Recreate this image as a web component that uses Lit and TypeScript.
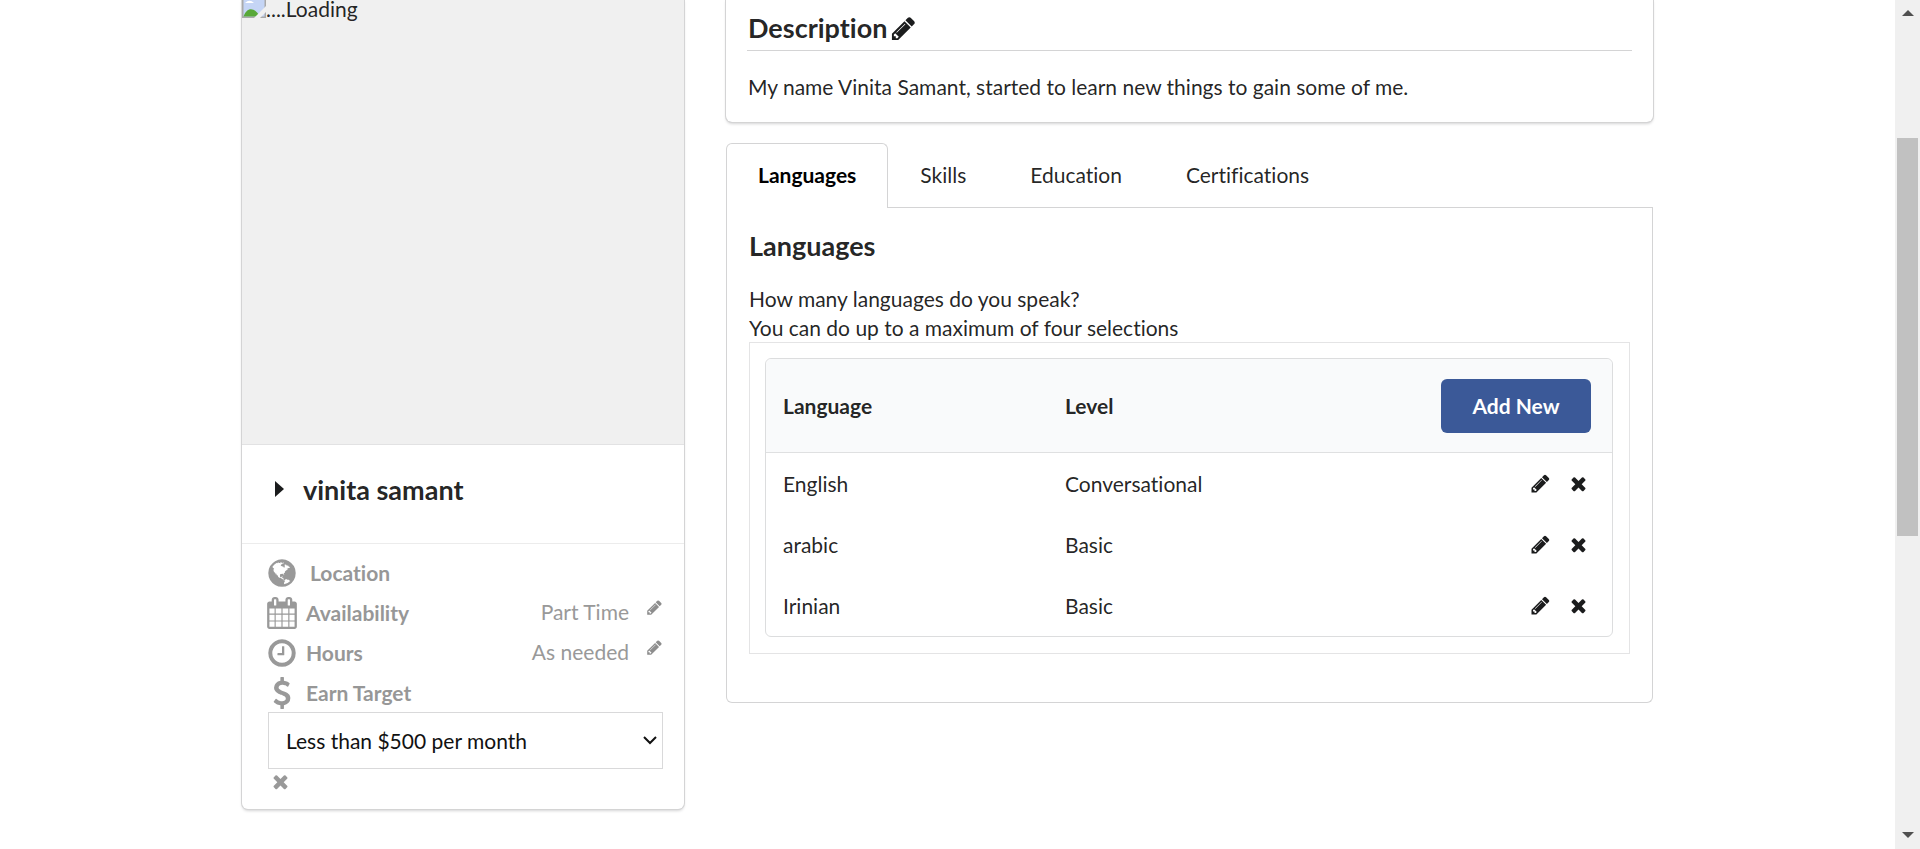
import { LitElement, html, css, svg } from "lit";
import { customElement, property, state } from "lit/decorators.js";

const GLYPHS: Record<string, string> = {
  pencil:
    "M491 1536l91-91-235-235-91 91v107h128v128h107zm523-928q0-22-22-22-10 0-17 7l-542 542q-7 7-7 17 0 22 22 22 10 0 17-7l542-542q7-7 7-17zm-54-192l416 416-832 832h-416v-416zm683 96q0 53-37 90l-166 166-416-416 166-165q36-38 90-38 53 0 91 38l235 234q37 39 37 91z",
  close:
    "M1490 1322q0 40-28 68l-136 136q-28 28-68 28t-68-28l-294-294-294 294q-28 28-68 28t-68-28l-136-136q-28-28-28-68t28-68l294-294-294-294q-28-28-28-68t28-68l136-136q28-28 68-28t68 28l294 294 294-294q28-28 68-28t68 28l136 136q28 28 28 68t-28 68l-294 294 294 294q28 28 28 68z",
  globe:
    "M896 128q209 0 385.5 103t279.5 279.5 103 385.5-103 385.5-279.5 279.5-385.5 103-385.5-103-279.5-279.5-103-385.5 103-385.5 279.5-279.5 385.5-103zm274 521q-2 1-9.5 9.5t-13.5 9.5q2 0 4.5-5t5-11 3.5-7q6-7 22-15 14-6 52-12 34-8 51 11-2-2 9.5-13t14.5-12q3-2 15-4.5t15-7.5l2-22q-12 1-17.5-7t-6.5-21q0 2-6 8 0-7-4.5-8t-11.5 1-9 1q-10-3-15-7.5t-8-16.5-4-15q-2-5-9.5-11t-9.5-10q-1-2-2.5-5.5t-3-6.5-4-5.5-5.5-2.5-7 5-7.5 10-4.5 5q-3-2-6-1.5t-4.5 1-4.5 3-5 3.5q-3 2-8.5 3t-8.5 2q15-5-1-11-10-4-16-3 9-4 7.5-12t-8.5-14h5q-1-4-8.5-8.5t-17.5-8.5-13-6q-8-5-34-9.5t-33-.5q-5 6-4.5 10.5t4 14 3.5 12.5q1 6-5.5 13t-6.5 12q0 7 14 15.5t10 21.5q-3 8-16 16t-16 12q-5 8-1.5 18.5t10.5 16.5q2 2 1.5 4t-3.5 4.5-5.5 4-6.5 3.5l-3 2q-11 5-20.5-6t-13.5-26q-7-25-16-30-23-8-29 1-5-13-41-26-25-9-58-4 6-1 0-15-7-15-19-12 3-6 4-17.5t1-13.5q3-13 12-23 1-1 7-8.5t9.5-13.5.5-6q35 4 50-11 5-5 11.5-17t10.5-17q9-6 14-5.5t14.5 5.5 14.5 5q14 1 15.5-11t-7.5-20q12 1 3-17-4-7-8-9-12-4-27 5-8 4 2 8-1-1-9.5 10.5t-16.5 17.5-16-5q-1-1-5.5-13.5t-9.5-13.5q-8 0-16 15 3-8-11-15t-24-8q19-12-8-27-7-4-20.5-5t-19.5 4q-5 7-5.5 11.5t5 8 10.5 5.5 11.5 4 8.5 3q14 10 8 14-2 1-8.5 3.5t-11.5 4.5-6 4q-3 4 0 14t-2 14q-5-5-9-17.5t-7-16.5q7 9-25 6l-10-1q-4 0-16 2t-20.5 1-13.5-8q-4-8 0-20 1-4 4-2-4-3-11-9.5t-10-8.5q-46 15-94 41 6 1 12-1 5-2 13-6.5t10-5.5q34-14 42-7l5-5q14 16 20 25-7-4-30-1-20 6-22 12 7 12 5 18-4-3-11.5-10t-14.5-11-15-5q-16 0-22 1-146 80-235 222 7 7 12 8 4 1 5 9t2.5 11 11.5-3q9 8 3 19 1-1 44 27 19 17 21 21 3 11-10 18-1-2-9-9t-9-4q-3 5 .5 18.5t10.5 12.5q-7 0-9.5 16t-2.5 35.5-1 23.5l2 1q-3 12 5.5 34.5t21.5 19.5q-13 3 20 43 6 8 8 9 3 2 12 7.5t15 10 10 10.5q4 5 10 22.5t14 23.5q-2 6 9.5 20t10.5 23q-1 0-2.5 1t-2.5 1q3 7 15.5 14t15.5 13q1 3 2 10t3 11 8 2q2-20-24-62-15-25-17-29-3-5-5.5-15.5t-4.5-14.5q2 0 6 1.5t8.5 3.5 7.5 4 2 3q-3 7 2 17.5t12 18.5 17 19 12 13q6 6 14 19.5t0 13.5q9 0 20 10t17 20q5 8 8 26t5 24q2 7 8.5 13.5t12.5 9.5l16 8 13 7q5 2 18.5 10.5t21.5 11.5q10 4 16 4t14.5-2.5 13.5-3.5q15-2 29 15t21 21q36 19 55 11-2 1 .5 7.5t8 15.5 9 14.5 5.5 8.5q5 6 18 15t18 15q6-4 7-9-3 8 7 20t18 10q14-3 14-32-31 15-49-18 0-1-2.5-5.5t-4-8.5-2.5-8.5 0-7.5 5-3q9 0 10-3.5t-2-12.5-4-13q-1-8-11-20t-12-15q-5 9-16 8t-16-9q0 1-1.5 5.5t-1.5 6.5q-13 0-15-1 1-3 2.5-17.5t3.5-22.5q1-4 5.5-12t7.5-14.5 4-12.5-4.5-9.5-17.5-2.5q-19 1-26 20-1 3-3 10.5t-5 11.5-9 7q-7 3-24 2t-24-5q-13-8-22.5-29t-9.5-37q0-10 2.5-26.5t3-25-5.5-24.5q3-2 9-9.5t10-10.5q2-1 4.5-1.5t4.5 0 4-1.5 3-6q-1-1-4-3-3-3-4-3 7 3 28.5-1.5t27.5 1.5q15 11 22-2 0-1-2.5-9.5t-.5-13.5q5 27 29 9 3 3 15.5 5t17.5 5q3 2 7 5.5t5.5 4.5 5-.5 8.5-6.5q10 14 12 24 11 40 19 44 7 3 11 2t4.5-9.5 0-14-1.5-12.5l-1-8v-18l-1-8q-15-3-18.5-12t1.5-18.5 15-18.5q1-1 8-3.5t15.5-6.5 12.5-8q21-19 15-35 7 0 11-9-1 0-5-3t-7.5-5-4.5-2q9-5 2-16 5-3 7.5-11t7.5-10q9 12 21 2 8-8 1-16 5-7 20.5-10.5t18.5-9.5q7 2 8-2t1-12 3-12q4-5 15-9t13-5l17-11q3-4 0-4 18 2 31-11 10-11-6-20 3-6-3-9.5t-15-5.5q3-1 11.5-.5t10.5-1.5q15-10-7-16-17-5-43 12zm-163 877q206-36 351-189-3-3-12.5-4.5t-12.5-3.5q-18-7-24-8 1-7-2.5-13t-8-9-12.5-8-11-7q-2-2-7-6t-7-5.5-7.5-4.5-8.5-2-10 1l-3 1q-3 1-5.5 2.5t-5.5 3-4 3 0 2.5q-21-17-36-22-5-1-11-5.5t-10.5-7-10-1.5-11.5 7q-5 5-6 15t-2 13q-7-5 0-17.5t2-18.5q-3-6-10.5-4.5t-12 4.5-11.5 8.5-9 6.5-8.5 5.5-8.5 7.5q-3 4-6 12t-5 11q-2-4-11.5-6.5t-9.5-5.5q2 10 4 35t5 38q7 31-12 48-27 25-29 40-4 22 12 26 0 7-8 20.5t-7 21.5q0 6 2 16z",
  calendar:
    "M192 1664h288v-288h-288v288zm352 0h320v-288h-320v288zm-352-352h288v-320h-288v320zm352 0h320v-320h-320v320zm-352-384h288v-288h-288v288zm736 736h320v-288h-320v288zm-384-736h320v-288h-320v288zm768 736h288v-288h-288v288zm-384-352h320v-320h-320v320zm-352-864v-288q0-13-9.5-22.5t-22.5-9.5h-64q-13 0-22.5 9.5t-9.5 22.5v288q0 13 9.5 22.5t22.5 9.5h64q13 0 22.5-9.5t9.5-22.5zm736 864h288v-320h-288v320zm-384-384h320v-288h-320v288zm384 0h288v-288h-288v288zm32-480v-288q0-13-9.5-22.5t-22.5-9.5h-64q-13 0-22.5 9.5t-9.5 22.5v288q0 13 9.5 22.5t22.5 9.5h64q13 0 22.5-9.5t9.5-22.5zm384-64v1280q0 52-38 90t-90 38h-1408q-52 0-90-38t-38-90v-1280q0-52 38-90t90-38h128v-96q0-66 47-113t113-47h64q66 0 113 47t47 113v96h384v-96q0-66 47-113t113-47h64q66 0 113 47t47 113v96h128q52 0 90 38t38 90z",
  clock:
    "M1024 544v448q0 14-9 23t-23 9h-320q-14 0-23-9t-9-23v-64q0-14 9-23t23-9h224v-352q0-14 9-23t23-9h64q14 0 23 9t9 23zm416 352q0-148-73-273t-198-198-273-73-273 73-198 198-73 273 73 273 198 198 273 73 273-73 198-198 73-273zm224 0q0 209-103 385.5t-279.5 279.5-385.5 103-385.5-103-279.5-279.5-103-385.5 103-385.5 279.5-279.5 385.5-103 385.5 103 279.5 279.5 103 385.5z",
  dollar:
    "M1362 1185q0 153-99.5 263.5t-258.5 136.5v175q0 14-9 23t-23 9h-135q-13 0-22.5-9.5t-9.5-22.5v-175q-66-9-127.5-31t-101.5-44.5-74-48-46.5-37.5-17.5-18q-17-21-2-41l103-135q7-10 23-12 15-2 24 9l2 2q113 99 243 125 37 8 74 8 81 0 142.5-43t61.5-122q0-28-15-53t-33.5-42-58.5-37.5-66-32-80-32.5q-39-16-61.5-25t-61.5-26.5-62.5-31-56.5-35.5-53.5-42.5-43.5-49-35.5-58-21-66.5-8.5-78q0-138 98-242t255-134v-180q0-13 9.5-22.5t22.5-9.5h135q14 0 23 9t9 23v176q57 6 110.5 23t87 33.5 63.5 37.5 39 29 15 14q17 18 5 38l-81 146q-8 15-23 16-14 3-27-7-3-3-14.5-12t-39-26.5-58.5-32-74.5-26-85.5-11.5q-95 0-155 43t-60 111q0 26 8.5 48t29.5 41.5 39.5 33 56 31 60.5 27 70 27.5q53 20 81 31.5t76 35 75.5 42.5 62 50 53 63.5 31.5 76.5 13 94z",
};

@customElement("ui-icon")
class UiIcon extends LitElement {
  static styles = css`
    :host { display: block; flex: none; width: 21px; height: 21px; }
    .glyph { display: block; width: 100%; height: 100%; fill: currentColor; }
  `;
  @property() name = "pencil";
  render() {
    return html`<svg class="glyph" viewBox="0 0 1792 1792" aria-hidden="true">
      ${svg`<path d=${GLYPHS[this.name]}></path>`}
    </svg>`;
  }
}

@customElement("profile-card")
class ProfileCard extends LitElement {
  static styles = css`
    :host { display: block; }
    * { box-sizing: border-box; }
    .card {
      border-radius: 0 0 6px 6px;
      background: #fff;
      box-shadow: 0 2px 3px 0 #d4d4d5, 0 0 0 1px #d4d4d5;
    }
    .photo {
      display: flex;
      box-sizing: content-box;
      align-items: flex-start;
      aspect-ratio: 1;
      padding-bottom: 2px;
      background: #f0f0f0;
      border-bottom: 1px solid #e2e2e3;
      line-height: 18px;
    }
    .broken { display: block; width: 24px; height: 18px; }
    .name {
      display: flex;
      align-items: center;
      gap: 19px;
      margin: 0;
      padding: 28px 33px 36px;
      border-bottom: 1px solid #ececec;
      font-size: 27px;
      line-height: 34px;
      font-weight: 700;
    }
    .caret { display: block; width: 9px; height: 16px; margin-bottom: 2px; fill: #1b1c1d; }
    .facts { padding: 8px 21px 17px 24px; color: #999; }
    .list { margin: 0; padding: 0; list-style: none; }
    .fact { display: flex; align-items: center; gap: 8px; height: 40px; padding-top: 2px; }
    .fact.wide { gap: 12px; }
    .big { width: 32px; height: 32px; }
    .label { flex: 1; font-weight: 700; color: #979797; }
    .value { padding-bottom: 2px; }
    .edit {
      align-self: flex-start;
      margin: 5px 0 0 9px;
      padding: 0;
      border: 0;
      background: none;
      color: #8d8d8d;
      cursor: pointer;
    }
    .small { width: 17px; height: 17px; }
    .picker { display: grid; margin-left: 2px; align-items: center; }
    .select {
      grid-area: 1 / 1;
      appearance: none;
      width: 100%;
      height: 57px;
      padding: 0 17px;
      border: 1px solid #d9d9da;
      border-radius: 0;
      background: #fff;
      color: #111;
      font: inherit;
    }
    .chevron {
      grid-area: 1 / 1;
      justify-self: end;
      width: 14px;
      height: 9px;
      margin-right: 6px;
      pointer-events: none;
      fill: none;
      stroke: #111;
      stroke-width: 2;
    }
    .clear { display: block; margin: 2px 0 0 4px; padding: 0; border: 0; background: none; color: #999; cursor: pointer; }
  `;
  private fact(icon: string, label: string, value?: string) {
    return html`<li class="fact ${icon === "globe" ? "wide" : ""}">
      <ui-icon class="big" name=${icon}></ui-icon>
      <span class="label" id=${icon}>${label}</span>
      ${value
        ? html`<span class="value">${value}</span>
            <button class="edit" aria-label="Edit ${label}"><ui-icon class="small" name="pencil"></ui-icon></button>`
        : ""}
    </li>`;
  }
  render() {
    return html`<aside class="card">
      <div class="photo">
        <svg class="broken" viewBox="0 4 16 12" aria-hidden="true">
          <path d="M0 0H16V16H0Z" fill="#a9a9a9"></path>
          <path d="M1 1H15V15H1Z" fill="#c5d5f5"></path>
          <path d="M2 6q3-3 6 0z" fill="#fff"></path>
          <path d="M1 15C3 9 8 8 12 15Z" fill="#58a838"></path>
          <path d="M16 8L8 16h4l4-4z" fill="#f0f0f0"></path>
        </svg>
        <span>....Loading</span>
      </div>
      <h3 class="name">
        <svg class="caret" viewBox="0 0 9 16" aria-hidden="true"><path d="M0 0L9 8L0 16Z"></path></svg>
        vinita samant
      </h3>
      <div class="facts">
        <ul class="list">
          ${this.fact("globe", "Location")}
          ${this.fact("calendar", "Availability", "Part Time")}
          ${this.fact("clock", "Hours", "As needed")}
          ${this.fact("dollar", "Earn Target")}
        </ul>
        <div class="picker">
          <select class="select" aria-labelledby="dollar">
            <option>Less than $500 per month</option>
            <option>Between $500 and $1000 per month</option>
            <option>More than $1000 per month</option>
          </select>
          <svg class="chevron" viewBox="0 0 14 9" aria-hidden="true"><path d="M1 1l6 6l6-6"></path></svg>
        </div>
        <button class="clear" aria-label="Cancel"><ui-icon name="close"></ui-icon></button>
      </div>
    </aside>`;
  }
}

@customElement("profile-details")
class ProfileDetails extends LitElement {
  static styles = css`
    :host { display: block; }
    * { box-sizing: border-box; }
    .about {
      padding: 0 21px;
      border-radius: 0 0 6px 6px;
      box-shadow: 0 2px 3px 0 #d4d4d5, 0 0 0 1px #d4d4d5;
    }
    .heading { display: flex; align-items: center; gap: 3px; margin: 0; font-size: 27px; line-height: 34px; font-weight: 700; }
    .about .heading { padding: 11px 1px 5px; border-bottom: 1px solid #d4d4d5; }
    .plain { display: block; padding: 0; border: 0; background: none; color: #1b1c1d; cursor: pointer; }
    .medium { width: 27px; height: 27px; }
    .bio { margin: 0; padding: 21px 1px 20px; line-height: 30px; }
    .tabs { display: flex; margin-top: 21px; border-bottom: 1px solid #d4d4d5; }
    .tab {
      height: 64px;
      padding: 0 32px;
      border: 0;
      background: none;
      color: rgba(0, 0, 0, 0.87);
      font: inherit;
      cursor: pointer;
    }
    .tab.active {
      height: 65px;
      margin-bottom: -1px;
      padding: 0 31px 2px;
      border: 1px solid #d4d4d5;
      border-bottom: 0;
      border-radius: 6px 6px 0 0;
      background: #fff;
      color: #000;
      font-weight: 700;
    }
    .panel { padding: 21px 22px 48px; border: 1px solid #d4d4d5; border-top: 0; border-radius: 0 0 6px 6px; }
    .hint { margin: 21px 0 0; line-height: 29px; }
    .frame { padding: 15px 16px 16px 15px; border: 1px solid #e4e4e5; }
    .table {
      width: 100%;
      border: 1px solid #dcddde;
      border-radius: 6px;
      border-collapse: separate;
      border-spacing: 0;
      table-layout: fixed;
      text-align: left;
    }
    .head { height: 94px; padding: 0 17px; background: #f9fafb; border-bottom: 1px solid #dfe0e1; font-weight: 700; }
    .head:first-child { border-top-left-radius: 6px; }
    .head:last-child { padding-right: 21px; border-top-right-radius: 6px; }
    .cell { height: 61px; padding: 0 17px; }
    .actions { display: flex; justify-content: flex-end; gap: 17px; padding-right: 6px; }
    .add {
      display: block;
      width: 150px;
      height: 54px;
      margin-left: auto;
      padding: 0;
      border: 0;
      border-radius: 6px;
      background: #3b5998;
      color: #fff;
      font: inherit;
      font-weight: 700;
      cursor: pointer;
    }
  `;
  @state() private active = 0;
  private tabs = ["Languages", "Skills", "Education", "Certifications"];
  private rows = [
    ["English", "Conversational"],
    ["arabic", "Basic"],
    ["Irinian", "Basic"],
  ];
  render() {
    return html`
      <section class="about">
        <h3 class="heading">
          Description
          <button class="plain" aria-label="Edit description"><ui-icon class="medium" name="pencil"></ui-icon></button>
        </h3>
        <p class="bio">My name Vinita Samant, started to learn new things to gain some of me.</p>
      </section>
      <div class="tabs" role="tablist">
        ${this.tabs.map(
          (t, i) => html`<button
            class="tab ${i === this.active ? "active" : ""}"
            role="tab"
            aria-selected=${i === this.active ? "true" : "false"}
            @click=${() => (this.active = i)}
          >${t}</button>`
        )}
      </div>
      <section class="panel" role="tabpanel">
        <h3 class="heading">${this.tabs[this.active]}</h3>
        <p class="hint">How many languages do you speak?<br />You can do up to a maximum of four selections</p>
        <div class="frame">
          <table class="table">
            <thead>
              <tr>
                <th class="head">Language</th>
                <th class="head">Level</th>
                <th class="head"><button class="add">Add New</button></th>
              </tr>
            </thead>
            <tbody>
              ${this.rows.map(
                ([lang, level]) => html`<tr>
                  <td class="cell">${lang}</td>
                  <td class="cell">${level}</td>
                  <td class="cell">
                    <div class="actions">
                      <button class="plain" aria-label="Edit ${lang}"><ui-icon name="pencil"></ui-icon></button>
                      <button class="plain" aria-label="Remove ${lang}"><ui-icon name="close"></ui-icon></button>
                    </div>
                  </td>
                </tr>`
              )}
            </tbody>
          </table>
        </div>
      </section>
    `;
  }
}

@customElement("scroll-rail")
class ScrollRail extends LitElement {
  static styles = css`
    :host {
      display: grid;
      grid-template-rows: 26px 112fr 398fr 287fr 26px;
      justify-items: center;
      width: 25px;
      height: 100vh;
      background: #f0f0f0;
    }
    .arrow { display: block; width: 12px; height: 26px; fill: #505050; }
    .thumb { grid-row: 3; width: 21px; background: #c1c1c1; }
    .down { grid-row: 5; }
  `;
  render() {
    return html`
      <svg class="arrow" viewBox="0 0 12 26" aria-hidden="true"><path d="M0 16L6 10L12 16Z"></path></svg>
      <div class="thumb"></div>
      <svg class="arrow down" viewBox="0 0 12 26" aria-hidden="true"><path d="M0 9L6 15L12 9Z"></path></svg>
    `;
  }
}

@customElement("app-root")
class AppRoot extends LitElement {
  static styles = css`
    :host {
      display: grid;
      grid-template-columns: 1fr auto;
      height: 100vh;
      overflow: hidden;
      background: #fff;
      color: rgba(0, 0, 0, 0.87);
      font-family: Lato, "Liberation Sans", sans-serif;
      font-size: 21px;
      font-variant-ligatures: no-common-ligatures;
      line-height: 30px;
    }
    .page {
      display: grid;
      grid-template-columns: 442fr 927fr;
      column-gap: 42px;
      align-items: start;
      width: 100%;
      max-width: 1411px;
      margin: 0 auto;
    }
  `;
  render() {
    return html`
      <main class="page">
        <profile-card></profile-card>
        <profile-details></profile-details>
      </main>
      <scroll-rail></scroll-rail>
    `;
  }
}
